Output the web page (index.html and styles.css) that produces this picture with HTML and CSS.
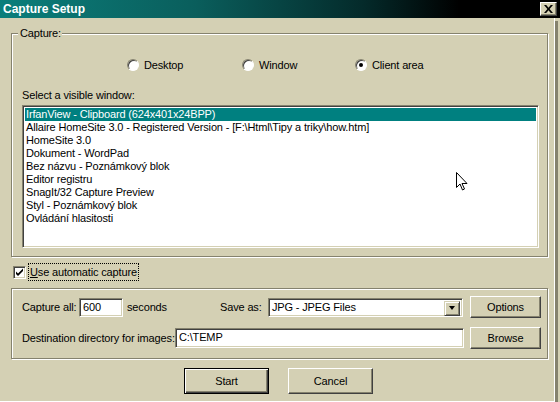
FILE: index.html
```html
<!DOCTYPE html>
<html>
<head>
<meta charset="utf-8">
<title>Capture Setup</title>
<link rel="stylesheet" href="styles.css">
</head>
<body>
<div class="window">
  <div class="titlebar">
    <span class="title">Capture Setup</span>
    <span class="close-btn">
      <svg width="9" height="8" viewBox="0 0 9 8"><path d="M0 0h2.2l2.3 2.7L6.8 0H9L5.6 4 9 8H6.8L4.5 5.3 2.2 8H0l3.4-4z" fill="#000"/></svg>
    </span>
  </div>
  <div class="client">
    <div class="group group-capture">
      <span class="group-title">Capture:</span>
      <div class="radios">
        <label class="radio r1"><span class="rb"></span>Desktop</label>
        <label class="radio r2"><span class="rb"></span>Window</label>
        <label class="radio r3"><span class="rb checked"></span>Client area</label>
      </div>
      <div class="select-label">Select a visible window:</div>
      <div class="listbox">
        <div class="item selected">IrfanView - Clipboard (624x401x24BPP)</div>
        <div class="item">Allaire HomeSite 3.0 - Registered Version - [F:\Html\Tipy a triky\how.htm]</div>
        <div class="item">HomeSite 3.0</div>
        <div class="item">Dokument - WordPad</div>
        <div class="item">Bez názvu - Poznámkový blok</div>
        <div class="item">Editor registru</div>
        <div class="item">SnagIt/32 Capture Preview</div>
        <div class="item">Styl - Poznámkový blok</div>
        <div class="item">Ovládání hlasitosti</div>
      </div>
    </div>

    <div class="check-row">
      <span class="cb">
        <svg width="9" height="9" viewBox="0 0 9 9"><path d="M1 3.5v2.5l2 2 5-5V0.5l-5 5z" fill="#000"/></svg>
      </span>
      <span class="focus-text"><u>U</u>se automatic capture</span>
    </div>

    <div class="group group-auto">
      <div class="row">
        <span class="lbl w-capture">Capture all:</span>
        <span class="field f-seconds">600</span>
        <span class="lbl w-seconds">seconds</span>
        <span class="lbl w-saveas">Save as:</span>
        <span class="field combo">JPG - JPEG Files<span class="drop"><span class="tri"></span></span></span>
        <span class="btn btn-side">Options</span>
      </div>
      <div class="row row2">
        <span class="lbl w-dest">Destination directory for images:</span>
        <span class="field f-dest">C:\TEMP</span>
        <span class="btn btn-side btn-browse">Browse</span>
      </div>
    </div>

    <div class="buttons">
      <span class="btn btn-main default">Start</span>
      <span class="btn btn-main">Cancel</span>
    </div>
  </div>
  <svg class="cursor" width="12" height="19" viewBox="0 0 12 19">
    <path d="M0.5 0.5v15l3.5-3.5 2.5 6 2-1-2.5-5.5h5z" fill="#fff" stroke="#000" stroke-width="1"/>
  </svg>
</div>
</body>
</html>
```

FILE: styles.css
```css
* { box-sizing: border-box; }

html, body {
  margin: 0;
  padding: 0;
}

body {
  background: #d4d0b4;
  font-family: "Liberation Sans", Arial, sans-serif;
  font-size: 11px;
  line-height: 13px;
  letter-spacing: -0.15px;
  color: #000;
}

.window {
  position: relative;
  width: 560px;
  height: 402px;
  background: #d4d0b4;
  overflow: hidden;
}

.titlebar {
  height: 18px;
  display: flex;
  align-items: center;
  justify-content: space-between;
  padding: 0 2px 0 3px;
  background: linear-gradient(to right, #0b7e7b 0%, #0a5e5c 35%, #042a2a 65%, #000 82%, #000 100%);
}

.title {
  color: #fff;
  font-weight: bold;
  font-size: 12px;
  line-height: 14px;
  letter-spacing: 0;
}

.close-btn {
  width: 17px;
  height: 14px;
  margin-right: 1px;
  display: flex;
  align-items: center;
  justify-content: center;
  background: #d4d0b4;
  border: 1px solid;
  border-color: #fff #404040 #404040 #fff;
  box-shadow: inset -1px -1px #85826e;
}

.client {
  height: 384px;
  padding: 15px 0 0 11px;
  border-right: 1px solid #fff;
  border-bottom: 1px solid #fff;
  box-shadow: 3px 3px 0 #85826e;
  width: 555px;
}

.group {
  position: relative;
  width: 537px;
  border: 1px solid #85826e;
  box-shadow: inset 1px 1px #fff, 1px 1px #fff;
}

.group-title {
  position: absolute;
  top: -7px;
  left: 6px;
  padding: 0 1px 0 2px;
  background: #d4d0b4;
}

.group-capture {
  height: 224px;
  padding: 24px 0 0 0;
}

.radios {
  display: flex;
  padding-left: 115px;
  height: 14px;
}

.radio {
  display: flex;
  align-items: center;
  gap: 5px;
}

.r1 { width: 115px; }
.r2 { width: 113px; }

.rb {
  position: relative;
  width: 12px;
  height: 12px;
  border-radius: 50%;
  background: #fff;
  border: 1px solid;
  border-color: #85826e #fff #fff #85826e;
  box-shadow: inset 1px 1px #404040;
}

.rb.checked::after {
  content: "";
  position: absolute;
  left: 3px;
  top: 3px;
  width: 4px;
  height: 4px;
  border-radius: 50%;
  background: #000;
}

.select-label {
  margin: 17px 0 0 10px;
}

.listbox {
  margin: 3px 0 0 10px;
  width: 517px;
  height: 143px;
  background: #fff;
  border: 1px solid;
  border-color: #85826e #fff #fff #85826e;
  box-shadow: inset 1px 1px #404040, inset -1px -1px #d4d0b4;
  padding: 2px 2px;
}

.item {
  height: 13px;
  padding-left: 1px;
  white-space: nowrap;
}

.item.selected {
  background: #008080;
  color: #fff;
}

.check-row {
  display: flex;
  align-items: center;
  height: 16px;
  margin: 7px 0 0 2px;
}

.cb {
  width: 13px;
  height: 13px;
  background: #fff;
  border: 1px solid;
  border-color: #85826e #fff #fff #85826e;
  box-shadow: inset 1px 1px #404040, inset -1px -1px #d4d0b4;
  display: flex;
  align-items: center;
  justify-content: center;
}

.focus-text {
  margin-left: 3px;
  padding: 1px 1px 1px 1px;
  outline: 1px dotted #000;
  outline-offset: 0;
  line-height: 14px;
}

.group-auto {
  margin-top: 8px;
  height: 71px;
  padding: 7px 0 0 10px;
}

.row {
  display: flex;
  align-items: center;
  height: 22px;
}

.row2 {
  margin-top: 9px;
}

.lbl { white-space: nowrap; }
.w-capture { width: 57px; }
.w-seconds { width: 93px; margin-left: 4px; }
.w-saveas { width: 48px; }
.w-dest { width: 153px; }

.field {
  position: relative;
  height: 19px;
  background: #fff;
  border: 1px solid;
  border-color: #85826e #fff #fff #85826e;
  box-shadow: inset 1px 1px #404040, inset -1px -1px #d4d0b4;
  padding: 2px 3px;
  line-height: 13px;
  white-space: nowrap;
}

.f-seconds { width: 44px; }
.combo { width: 195px; }
.f-dest { width: 289px; height: 20px; }

.drop {
  position: absolute;
  right: 2px;
  top: 2px;
  width: 16px;
  height: 15px;
  background: #d4d0b4;
  border: 1px solid;
  border-color: #d4d0b4 #404040 #404040 #d4d0b4;
  box-shadow: inset 1px 1px #fff, inset -1px -1px #85826e;
  display: flex;
  align-items: center;
  justify-content: center;
}

.tri {
  width: 0;
  height: 0;
  border-left: 3.5px solid transparent;
  border-right: 3.5px solid transparent;
  border-top: 4px solid #000;
}

.btn {
  display: flex;
  align-items: center;
  justify-content: center;
  background: #d4d0b4;
  border: 1px solid;
  border-color: #fff #404040 #404040 #fff;
  box-shadow: inset -1px -1px #85826e;
}

.btn-side {
  width: 71px;
  height: 22px;
  margin-left: 7px;
}

.btn-browse {
  margin-left: 6px;
}

.buttons {
  display: flex;
  gap: 19px;
  margin: 9px 0 0 173px;
}

.btn-main {
  width: 85px;
  height: 26px;
}

.btn-main.default {
  border: 1px solid #000;
  box-shadow: inset 1px 1px #fff, inset -1px -1px #404040, inset -2px -2px #85826e;
}

.cursor {
  position: absolute;
  left: 456px;
  top: 172px;
}
```
